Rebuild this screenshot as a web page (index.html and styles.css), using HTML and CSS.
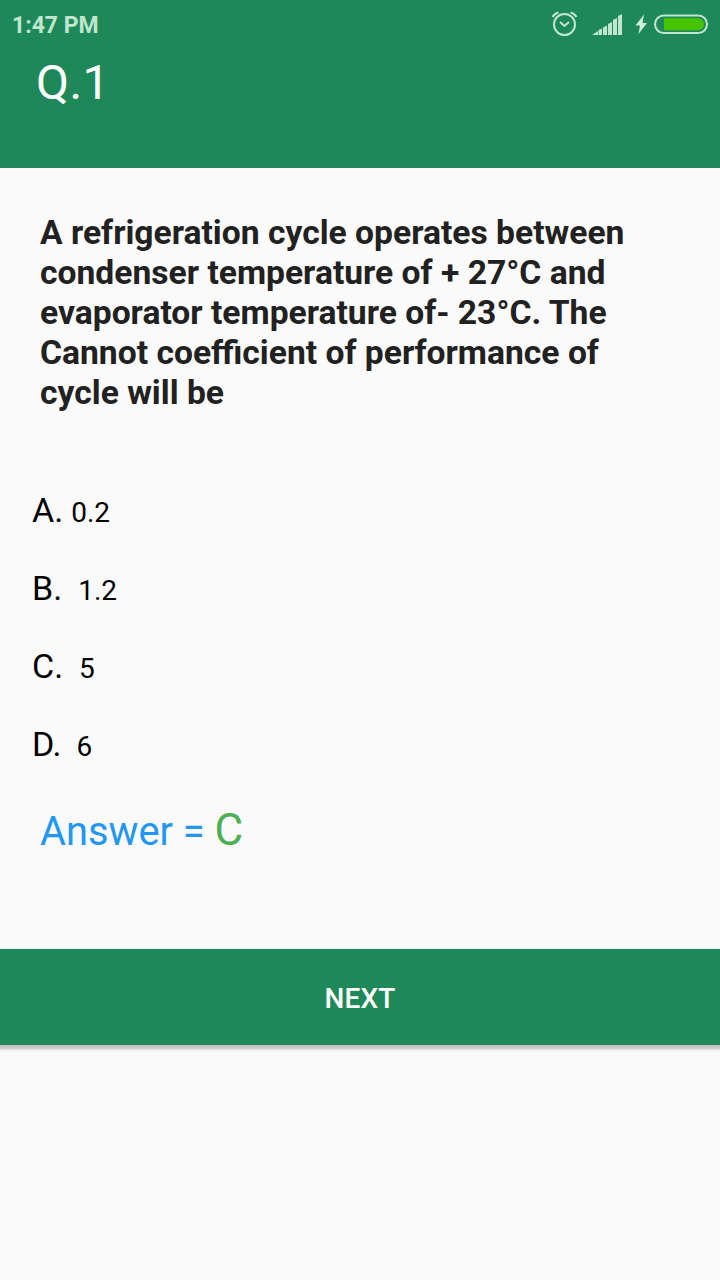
FILE: index.html
```html
<!DOCTYPE html>
<html lang="en">
<head>
<meta charset="utf-8">
<title>Q.1</title>
<link rel="stylesheet" href="styles.css">
</head>
<body>
<header class="appbar">
  <div class="status">
    <span class="time">1:47 PM</span>
    <svg class="status-icons" width="160" height="30" viewBox="0 0 160 30">
      <g fill="none" stroke="#c0e6d0" stroke-width="2">
        <circle cx="16.500" cy="16.500" r="10.500"/>
        <path d="M12 14l4.500 4 4.500-4M4.500 9q2-3.500 6-4.500M28.500 9q-2-3.500-6-4.500"/>
      </g>
      <path fill="#c0e6d0" d="M44 27l6-4v4zM50.500 22l3.500-1.500V27h-3.500zM55 19.500l4-2V27h-4zM60 16l4-2v13h-4zM65 12l4-2v17h-4zM70 8l4-2v21h-4z"/>
      <path fill="#d0eedc" d="M96 6.500l-8.500 11h4.500l-1.500 8.500 8.500-11h-4.500z"/>
      <rect x="107" y="7.500" width="52" height="17.500" rx="8.750" fill="none" stroke="#c0e6d0" stroke-width="2"/>
      <path fill="#46c400" d="M116 10.250h34q6 1 6 6t-6 6h-34z"/>
    </svg>
  </div>
  <h1 class="title">Q.1</h1>
</header>
<main class="content">
  <p class="question">A refrigeration cycle operates between<br>condenser temperature of + 27°C and<br>evaporator temperature of- 23°C. The<br>Cannot coefficient of performance of<br>cycle will be</p>
  <div class="options">
    <div class="option"><span class="letter">A.</span><span class="value value-a">0.2</span></div>
    <div class="option"><span class="letter">B.</span><span class="value">1.2</span></div>
    <div class="option"><span class="letter">C.</span><span class="value">5</span></div>
    <div class="option"><span class="letter">D.</span><span class="value value-d">6</span></div>
  </div>
  <p class="answer">Answer = <span class="answer-key">C</span></p>
</main>
<button class="next">NEXT</button>
<div class="shade"></div>
</body>
</html>
```
FILE: styles.css
```css
body { margin: 0; background: #fafafa; font-family: Roboto, sans-serif; color: #000; }
.appbar { height: 168px; background: #1f8858; }
.status { display: flex; justify-content: space-between; align-items: center; height: 46px; padding: 0 12px; }
.time { padding-top: 4px; font: 700 23px/47px Roboto, sans-serif; color: #c0e6d0; }
.title { margin: 8px 0 0 36px; font-size: 48px; line-height: 58px; font-weight: 400; letter-spacing: .4px; color: #fff; }
.content { height: 781px; box-sizing: border-box; padding: 45px 32px 0; }
.question { margin: 0 0 0 8px; font-size: 33.64px; line-height: 40px; font-weight: 700; color: #212121; white-space: nowrap; }
.options { margin-top: 58px; }
.option { display: flex; align-items: baseline; height: 78px; line-height: 78px; }
.letter { font-size: 34px; }
.value { font-size: 28px; margin-left: 16px; }
.value-a { margin-left: 8px; }
.value-d { margin-left: 15px; }
.answer { margin: 22px 0 0 8px; font-size: 39.8px; line-height: 50px; color: #2196f3; }
.answer-key { font-size: 44px; color: #4caf50; }
.next { display: block; width: 100%; height: 96px; padding: 3px 0 0; border: 0; background: #1f8858; color: #fff; font: 500 28px Roboto, sans-serif; letter-spacing: .2px; }
.shade { height: 7px; background: linear-gradient(#c5bfc0, #cec9ca 45%, #f0f0f0 75%, #fafafa); }
```
